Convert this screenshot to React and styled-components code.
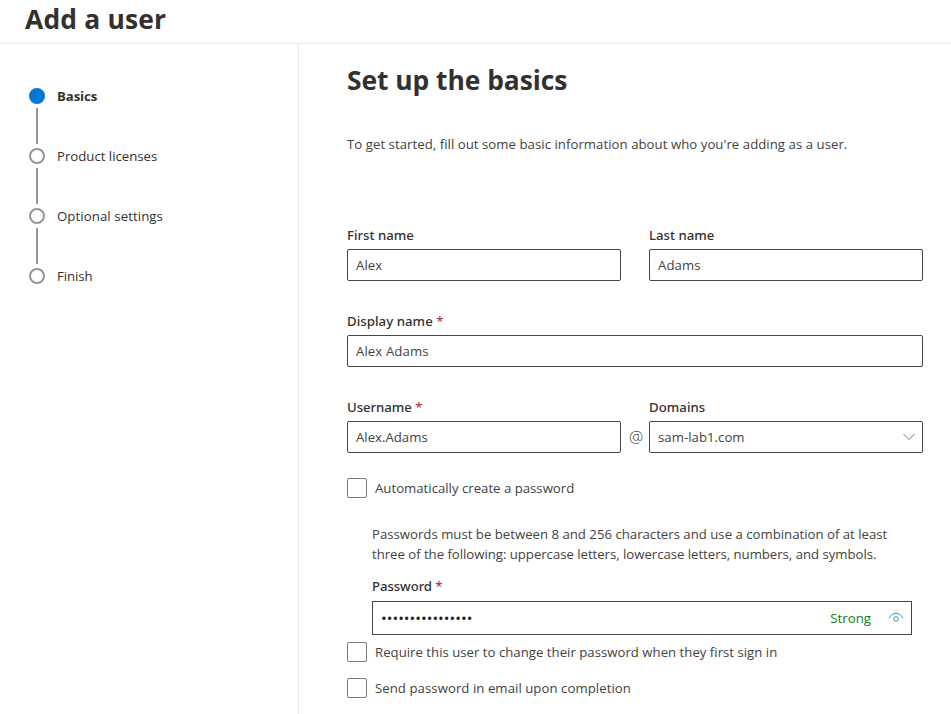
import React from 'react';
import styled, { createGlobalStyle } from 'styled-components';

const GlobalStyle = createGlobalStyle`
  * { box-sizing: border-box; }
  body {
    margin: 0;
    background: #fff;
    color: #444240;
    font-family: "Open Sans", "Noto Sans", sans-serif;
    font-size: 13.2px;
    line-height: 20px;
    overflow: hidden;
  }
`;

const Page = styled.div`
  display: flex;
  flex-direction: column;
  height: 714px;
`;

const Header = styled.header`
  height: 44px;
  padding: 1px 0 0 25px;
  border-bottom: 1px solid #e6e6e6;
`;

const Title = styled.h1`
  margin: 0;
  color: #323130;
  font-size: 26.4px;
  font-weight: 700;
  line-height: 36px;
  letter-spacing: ${(p) => p.$track || 0}px;
  white-space: nowrap;
`;

const Body = styled.div`
  display: flex;
  flex: 1;
  min-height: 0;
`;

const Sidebar = styled.nav`
  width: 299px;
  padding: 42px 0 0 29px;
  border-right: 1px solid #e6e6e6;
`;

const Steps = styled.ol`
  display: flex;
  flex-direction: column;
  margin: 0;
  padding: 0;
  list-style: none;
`;

const Step = styled.li`
  display: grid;
  grid-template-columns: 16px auto;
  grid-template-rows: 20px 40px;
  column-gap: 12px;
  align-items: center;
`;

const StepDot = styled.span`
  width: 16px;
  height: 16px;
  border: 2px solid ${(p) => (p.$active ? '#0078d4' : '#979593')};
  border-radius: 50%;
  background: ${(p) => (p.$active ? '#0078d4' : '#fff')};
`;

const StepLabel = styled.span`
  color: #323130;
  font-weight: ${(p) => (p.$active ? 700 : 400)};
  letter-spacing: ${(p) => p.$track || 0}px;
`;

const StepLine = styled.span`
  width: 2px;
  height: 36px;
  justify-self: center;
  background: #979593;
`;

const Main = styled.main`
  flex: 1;
  padding: 18px 28px 0 48px;
`;

const Intro = styled.p`
  margin: 36px 0 71px;
  letter-spacing: 0.04px;
  white-space: nowrap;
`;

const FieldRow = styled.div`
  display: flex;
  height: 56px;
  margin-bottom: 30px;
`;

const Field = styled.div`
  display: flex;
  flex: 1;
  flex-direction: column;
`;

const Label = styled.label`
  height: 20px;
  margin-bottom: ${(p) => p.$gap ?? 4}px;
  color: #323130;
  font-family: "Noto Sans", "Open Sans", sans-serif;
  font-weight: 500;
  letter-spacing: ${(p) => p.$track || 0}px;
`;

const Required = styled.span`
  color: #a4262c;
  font-weight: 400;
`;

const Box = styled.div`
  display: flex;
  align-items: center;
  height: ${(p) => (p.$tall ? 34 : 32)}px;
  padding: 0 8px;
  border: 1px solid #484644;
  border-radius: ${(p) => (p.$tall ? 0 : 2)}px;
  letter-spacing: ${(p) => p.$track || 0}px;
`;

const Separator = styled.div`
  width: 28px;
  padding: 30px 0 0 2px;
  font-size: 16px;
  font-weight: 300;
  text-align: center;
`;

const Chevron = styled.svg`
  width: 12px;
  height: 8px;
  margin-left: auto;
  margin-right: -1px;
  fill: none;
  stroke: #767574;
`;

const Check = styled.label`
  display: flex;
  align-items: center;
  gap: 8px;
  height: 20px;
  letter-spacing: ${(p) => p.$track || 0}px;
`;

const CheckBox = styled.span`
  width: 20px;
  height: 20px;
  border: 1px solid #7a7977;
  border-radius: 2px;
`;

const Options = styled.section`
  display: flex;
  flex-direction: column;
  margin-top: -5px;
`;

const PasswordPanel = styled.div`
  display: flex;
  flex-direction: column;
  width: 540px;
  margin: 26px 0 7px 25px;
`;

const Hint = styled.p`
  margin: 0 0 12px;
  white-space: nowrap;
`;

const HintLine = styled.span`
  display: block;
  letter-spacing: ${(p) => p.$track || 0}px;
`;

const Dots = styled.span`
  flex: 1;
  color: #201f1e;
  font-size: 15.2px;
`;

const Strength = styled.span`
  margin-right: 17px;
  color: #107c10;
  letter-spacing: 0.05px;
`;

const Eye = styled.svg`
  width: 16px;
  height: 12px;
  margin-right: -1px;
  fill: none;
  stroke: #3a96dd;
`;

const LastCheck = styled.div`
  margin-top: 16px;
`;

const steps = [
  { label: 'Basics', active: true, track: -0.1 },
  { label: 'Product licenses' },
  { label: 'Optional settings', track: 0.09 },
  { label: 'Finish', track: -0.05 },
];

function CheckOption({ children, track }) {
  return (
    <Check $track={track}>
      <CheckBox />
      {children}
    </Check>
  );
}

export default function App() {
  return (
    <Page>
      <GlobalStyle />
      <Header>
        <Title $track={0.2}>Add a user</Title>
      </Header>
      <Body>
        <Sidebar>
          <Steps>
            {steps.map((s, i) => (
              <Step key={s.label}>
                <StepDot $active={s.active} />
                <StepLabel $active={s.active} $track={s.track}>{s.label}</StepLabel>
                {i < steps.length - 1 && <StepLine />}
              </Step>
            ))}
          </Steps>
        </Sidebar>
        <Main>
          <Title as="h2" $track={-0.04}>Set up the basics</Title>
          <Intro>To get started, fill out some basic information about who you're adding as a user.</Intro>
          <FieldRow>
            <Field>
              <Label>First name</Label>
              <Box $track={0.05}>Alex</Box>
            </Field>
            <Separator />
            <Field>
              <Label>Last name</Label>
              <Box $track={0.05}>Adams</Box>
            </Field>
          </FieldRow>
          <FieldRow>
            <Field>
              <Label $track={0.05}>Display name <Required>*</Required></Label>
              <Box $track={0.1}>Alex Adams</Box>
            </Field>
          </FieldRow>
          <FieldRow>
            <Field>
              <Label $track={-0.05}>Username <Required>*</Required></Label>
              <Box>Alex.Adams</Box>
            </Field>
            <Separator>@</Separator>
            <Field>
              <Label $track={0.05}>Domains</Label>
              <Box $track={0.03}>
                sam-lab1.com
                <Chevron viewBox="0 0 12 8"><path d="M0.5 1 6 6.5 11.5 1" /></Chevron>
              </Box>
            </Field>
          </FieldRow>
          <Options>
            <CheckOption>Automatically create a password</CheckOption>
            <PasswordPanel>
              <Hint>
                <HintLine>Passwords must be between 8 and 256 characters and use a combination of at least</HintLine>
                <HintLine $track={-0.03}>three of the following: uppercase letters, lowercase letters, numbers, and symbols.</HintLine>
              </Hint>
              <Label $gap={5} $track={-0.08}>Password <Required>*</Required></Label>
              <Box $tall>
                <Dots>{'•'.repeat(16)}</Dots>
                <Strength>Strong</Strength>
                <Eye viewBox="0 0 16 12">
                  <path d="M1.2 6.5C2.3 3 5 1.4 8 1.4s5.7 1.6 6.8 5.1" />
                  <circle cx="8" cy="7" r="2.3" />
                </Eye>
              </Box>
            </PasswordPanel>
            <CheckOption track={0.01}>Require this user to change their password when they first sign in</CheckOption>
            <LastCheck>
              <CheckOption track={0.05}>Send password in email upon completion</CheckOption>
            </LastCheck>
          </Options>
        </Main>
      </Body>
    </Page>
  );
}
